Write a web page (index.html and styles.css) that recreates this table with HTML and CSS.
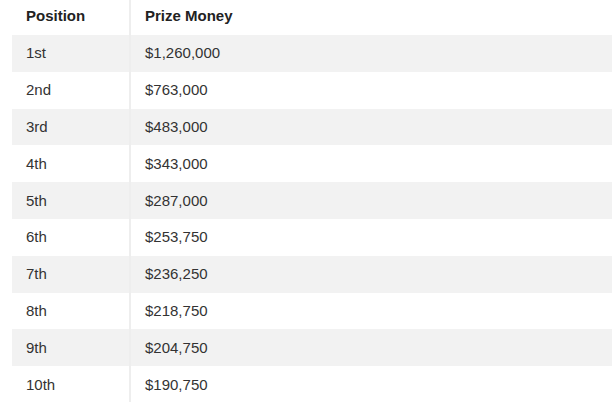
FILE: index.html
```html
<!DOCTYPE html>
<html>
<head>
<meta charset="utf-8">
<link rel="stylesheet" href="styles.css">
</head>
<body>
<table class="prize-table">
  <thead>
    <tr><th class="col-pos">Position</th><th>Prize Money</th></tr>
  </thead>
  <tbody>
    <tr><td class="col-pos">1st</td><td>$1,260,000</td></tr>
    <tr><td class="col-pos">2nd</td><td>$763,000</td></tr>
    <tr><td class="col-pos">3rd</td><td>$483,000</td></tr>
    <tr><td class="col-pos">4th</td><td>$343,000</td></tr>
    <tr><td class="col-pos">5th</td><td>$287,000</td></tr>
    <tr><td class="col-pos">6th</td><td>$253,750</td></tr>
    <tr><td class="col-pos">7th</td><td>$236,250</td></tr>
    <tr><td class="col-pos">8th</td><td>$218,750</td></tr>
    <tr><td class="col-pos">9th</td><td>$204,750</td></tr>
    <tr><td class="col-pos">10th</td><td>$190,750</td></tr>
  </tbody>
</table>
</body>
</html>
```
FILE: styles.css
```css
html, body {
  margin: 0;
  padding: 0;
  background: #fff;
}
body {
  font-family: "Liberation Sans", Arial, sans-serif;
  font-size: 15px;
  color: #333;
}
.prize-table {
  margin-left: 12px;
  width: 600px;
  border-collapse: collapse;
}
.prize-table th,
.prize-table td {
  text-align: left;
  padding: 0 14px 1px;
  height: 36.8px;
  box-sizing: border-box;
}
.prize-table thead th {
  height: 35px;
  padding-bottom: 4px;
  font-weight: bold;
  color: #222;
}
.prize-table .col-pos {
  width: 118px;
  border-right: 2px solid #eeeeee;
}
.prize-table tbody tr:nth-child(odd) td {
  background: #f2f2f2;
}
```
